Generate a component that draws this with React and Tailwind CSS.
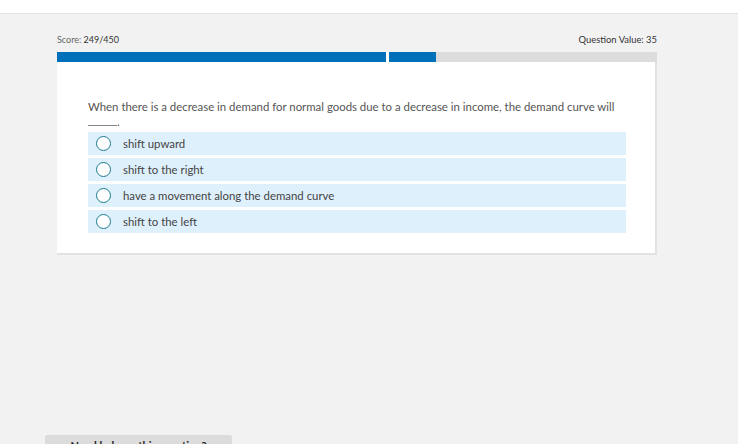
import React, { useState } from 'react';

const options = [
    "shift upward",
    "shift to the right",
    "have a movement along the demand curve",
    "shift to the left",
];

const App = () => {
    const [picked, setPicked] = useState(null);

    return (
        <div className="w-[738px] h-[444px] overflow-hidden bg-[#f2f2f2] font-['Lato',sans-serif]">
            <div className="h-[14px] bg-white border-b border-[#e3e3e3]"></div>
            <div className="ml-[57px] w-[600px]">
                <div className="flex justify-between items-end pt-[20px] pb-[6px] text-[9px] leading-[12px]">
                    <p className="text-[#666]">Score: <span className="text-[#333]">249/450</span></p>
                    <p className="text-[9.4px] text-[#333]">Question Value: 35</p>
                </div>
                <div className="flex h-[10px] bg-[#dcdcdc]">
                    <div className="w-[329px] bg-[#0070ba]"></div>
                    <div className="w-[3px] bg-white"></div>
                    <div className="w-[47px] bg-[#0070ba]"></div>
                </div>
                <div className="bg-white border-r-2 border-b-2 border-[#e2e2e2] pl-[31px] pr-[29px] pt-[37px] pb-[20px]">
                    <p className="text-[11.4px] leading-[15px] text-[#555]">
                        When there is a decrease in demand for normal goods due to a decrease in income, the demand curve will{' '}
                        <span className="inline-block w-[29px] border-b border-[#888] align-baseline"></span>.
                    </p>
                    <div className="flex flex-col gap-[3px] mt-[3px]">
                        {options.map((opt, i) => (
                            <label key={i} className="flex items-center h-[23px] bg-[#dff0fd] px-[8px] cursor-pointer" onClick={() => setPicked(i)}>
                                <span className="w-[15px] h-[15px] rounded-full border-[1.5px] border-[#197a91] bg-white flex items-center justify-center">
                                    {picked === i && <span className="w-[7px] h-[7px] rounded-full bg-[#197a91]"></span>}
                                </span>
                                <span className="ml-[12px] text-[11.4px] text-[#444]">{opt}</span>
                            </label>
                        ))}
                    </div>
                </div>
            </div>
            <div className="mt-[180px] ml-[45px] w-[187px] h-[20px] bg-[#dcdcdc] rounded-t-[2px] text-center text-[11px] leading-[12px] font-bold text-[#222] pt-[5px]">
                Need help on this question?
            </div>
        </div>
    )
}

export default App
